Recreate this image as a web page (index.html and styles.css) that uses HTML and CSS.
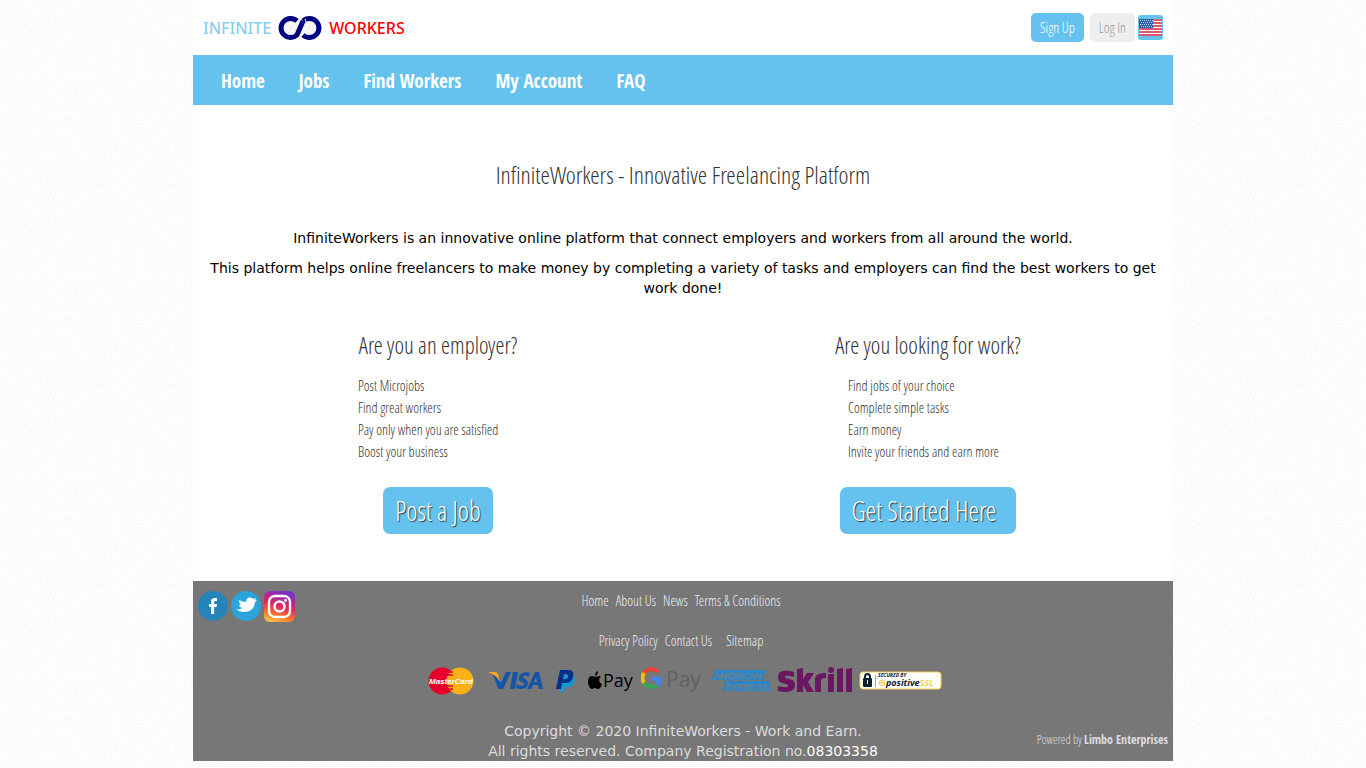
FILE: index.html
```html
<!DOCTYPE html>
<html lang="en">
<head>
    <meta charset="utf-8">
    <title>InfiniteWorkers - Innovative Freelancing Platform</title>
    <link rel="stylesheet" href="styles.css">
</head>
<body>
    <div class="container">
        <header class="header">
            <a href="#" class="logo" aria-label="Infinite Workers">
                <span class="logo-infinite">INFINITE</span>
                <svg width="44" height="26" viewBox="0 0 44 26">
                    <circle cx="12" cy="13" r="9" fill="#f4f4f4"/>
                    <circle cx="32" cy="13" r="9" fill="#f4f4f4"/>
                    <g fill="none" stroke="#000080" stroke-width="5">
                        <path d="M19 6A9.500 9.500 0 1 0 19 20L25 6"/>
                        <path d="M25 6A9.500 9.500 0 1 1 25 20"/>
                    </g>
                    <path d="M18 9l5-6M22 21l3-4M27 4l2 5" stroke="#fff" stroke-width="1"/>
                </svg>
                <span class="logo-workers">WORKERS</span>
            </a>
            <div class="user-links">
                <a href="#" class="btn-small signup">Sign Up</a>
                <a href="#" class="btn-small login">Log In</a>
                <a href="#" class="flag" aria-label="English">
                    <svg width="23" height="17" viewBox="0 0 23 17">
                        <rect width="23" height="17" fill="#fff"/>
                        <path d="M0 1h23M0 4h23M0 7h23M0 10h23M0 13h23M0 16h23" stroke="#d8253c" stroke-width="1.600"/>
                        <rect width="14" height="9" fill="#2d5fa8"/>
                        <path d="M1 1.500h13M2 3.500h12M1 5.500h13M2 7.500h12" stroke="#b9d4ee" stroke-width="1" stroke-dasharray="1 1"/>
                    </svg>
                </a>
            </div>
        </header>

        <nav class="nav">
            <a href="#">Home</a>
            <a href="#">Jobs</a>
            <a href="#">Find Workers</a>
            <a href="#">My Account</a>
            <a href="#">FAQ</a>
        </nav>

        <main class="main">
            <h1>InfiniteWorkers - Innovative Freelancing Platform</h1>
            <p>InfiniteWorkers is an innovative online platform that connect employers and workers from all around the world.</p>
            <p>This platform helps online freelancers to make money by completing a variety of tasks and employers can find the best workers to get work done!</p>

            <div class="columns">
                <section class="column">
                    <h2>Are you an employer?</h2>
                    <ul>
                        <li>Post Microjobs</li>
                        <li>Find great workers</li>
                        <li>Pay only when you are satisfied</li>
                        <li>Boost your business</li>
                    </ul>
                    <a href="#" class="btn-large">Post a Job</a>
                </section>
                <section class="column">
                    <h2>Are you looking for work?</h2>
                    <ul>
                        <li>Find jobs of your choice</li>
                        <li>Complete simple tasks</li>
                        <li>Earn money</li>
                        <li>Invite your friends and earn more</li>
                    </ul>
                    <a href="#" class="btn-large btn-start">Get Started Here</a>
                </section>
            </div>
        </main>

        <footer class="footer">
            <div class="social">
                <a href="#" aria-label="Facebook">
                    <svg width="30" height="30" viewBox="0 0 30 30">
                        <circle cx="15" cy="15" r="15" fill="#2585b8"/>
                        <path d="M13 23v-7h-2v-3h2v-2c0-3 1.500-4 4-4h2v3h-1.500c-1 0-1.300.5-1.300 1.300V13H19l-.4 3h-2.400v7z" fill="#fff"/>
                    </svg>
                </a>
                <a href="#" aria-label="Twitter">
                    <svg width="30" height="30" viewBox="0 0 30 30">
                        <circle cx="15" cy="15" r="15" fill="#2ba4dc"/>
                        <path d="M5 18c3 1 5 0 6-1-2-1-3-2-3-3h2c-2-2-2-3-2-5 2 1 5 2 7 2 0-4 4-6 7-3l3-1-1 2 2 0-2 2c0 7-6 10-11 10-3 0-6-1-8-3z" fill="#fff"/>
                    </svg>
                </a>
                <a href="#" aria-label="Instagram">
                    <svg width="31" height="31" viewBox="0 0 31 31">
                        <defs>
                            <linearGradient id="insta" x1="0.2" y1="1" x2="0.5" y2="0">
                                <stop offset="0" stop-color="#ffc447"/>
                                <stop offset="0.25" stop-color="#fa7a30"/>
                                <stop offset="0.55" stop-color="#e5265f"/>
                                <stop offset="1" stop-color="#7c2fc8"/>
                            </linearGradient>
                        </defs>
                        <rect width="31" height="31" rx="6" fill="url(#insta)"/>
                        <g fill="none" stroke="#fff" stroke-width="2.400">
                            <rect x="5" y="5" width="21" height="21" rx="6"/>
                            <circle cx="15.500" cy="15.500" r="5"/>
                        </g>
                        <circle cx="21.500" cy="9.500" r="1.400" fill="#fff"/>
                    </svg>
                </a>
            </div>

            <div class="footer-center">
                <div class="footer-links">
                    <a href="#">Home</a>
                    <a href="#">About Us</a>
                    <a href="#">News</a>
                    <a href="#">Terms &amp; Conditions</a>
                </div>
                <div class="footer-links">
                    <a href="#">Privacy Policy</a>
                    <a href="#">Contact Us</a>
                    <a href="#" class="sitemap">Sitemap</a>
                </div>
                <div class="payments">
                    <svg width="46" height="30" viewBox="0 0 46 30">
                        <circle cx="14" cy="15" r="13.500" fill="#e4002b"/>
                        <circle cx="32" cy="15" r="13.500" fill="#fbb017"/>
                        <path d="M20 6h5M19 9h6M18 20h7M19 23h6" stroke="#e4002b" stroke-width="1.500"/>
                        <text x="23" y="18" text-anchor="middle" class="mastercard-text">MasterCard</text>
                    </svg>
                    <svg class="visa" width="56" height="30" viewBox="0 0 56 30">
                        <path d="M0 6h8c2 0 3 1 3.500 3L14 17 19 6h5l-8 17h-5L7 11C6 8 3 7 0 6z" fill="#1555a5"/>
                        <path d="M0 6h8c2 0 3 1 3.500 3l1.500 7C10 10 6 8 0 6z" fill="#f9a61a"/>
                        <path d="M26 6h5l-3 17h-5zM43 7l-1 4c-4-2-6-1-6 0 0 2 5 2 5 6 0 6-7 7-12 5l1-4c3 2 7 2 7 0s-6-2-5-6c0-5 6-7 11-5z" fill="#1555a5"/>
                        <path d="M48 6h4l4 17h-4l-1-4h-5l-2 4h-4zM49 11l-2 5h3z" fill="#1555a5" fill-rule="evenodd"/>
                    </svg>
                    <svg class="paypal" width="19" height="30" viewBox="0 0 19 30">
                        <path d="M7 9h9c3 1 3 4 2 7-1 4-4 5-7 5h-2l-1 5H4z" fill="#139ad6"/>
                        <path d="M4 4h8c5 0 6 3 5 7-1 4-4 6-8 6H6l-1 6H0zM8 8l-1 5h2c4 0 4-5 1-5z" fill="#003087"/>
                    </svg>
                    <svg class="applepay" width="46" height="30" viewBox="0 0 46 30">
                        <path d="M7 10c0-3 1-4 3-5 0 3-1 4-3 5zM4 10c2 0 2 1 3 1s2-1 4-1c1 0 2 1 2 1-3 2-2 6 1 7-1 4-3 5-4 5s-2-1-3-1-2 1-3 1c-2 0-4-4-4-7 0-4 2-6 4-6z" fill="#000"/>
                        <text x="15" y="21" class="pay-text">Pay</text>
                    </svg>
                    <svg width="63" height="30" viewBox="0 0 63 30">
                        <g fill="none" stroke-width="4">
                            <path d="M17 6A9 9 0 0 0 3 7" stroke="#ea4335"/>
                            <path d="M3 7a9 9 0 0 0 0 10" stroke="#fbbc04"/>
                            <path d="M3 17A9 9 0 0 0 16 19" stroke="#34a853"/>
                            <path d="M16 19c2-2 3-3 3-6H11" stroke="#4285f4"/>
                        </g>
                        <text x="25" y="21" class="gpay-text">Pay</text>
                    </svg>
                    <svg width="60" height="30" viewBox="0 0 60 30">
                        <path d="M5 4h50l-3 10H0zM14 15h45v10H12z" fill="#2a86c8"/>
                        <text x="2" y="13" class="amex-text">AMERICAN</text>
                        <text x="14" y="24" class="amex-text">EXPRESS</text>
                    </svg>
                    <svg width="74" height="30" viewBox="0 0 74 30">
                        <path d="M16 6v5c-4-1-9-2-9 0 0 3 10 0 10 8 0 7-8 8-17 6v-5c5 1 10 2 10 0C10 16 0 20 0 11 0 4 8 4 16 6zM19 3l6-1v11l4-6h7l-6 9 6 10h-7l-4-7v7h-6zM37 26V14c0-5 3-7 11-7v5c-4 0-5 1-5 3v11zM50 8h6v18h-6zM59 3l6-1v24h-6zM68 3l6-1v24h-6z" fill="#6b1661"/>
                        <circle cx="53" cy="4" r="3" fill="#6b1661"/>
                    </svg>
                    <svg width="83" height="30" viewBox="0 0 83 30">
                        <rect x="1" y="6" width="81" height="17" rx="3" fill="#fff" stroke="#f5cf58" stroke-width="1"/>
                        <path d="M6 12v-1c0-4 5-4 5 0v1" fill="none" stroke="#0d202d" stroke-width="2"/>
                        <rect x="4" y="12" width="9" height="9" rx="1" fill="#0d202d"/>
                        <path d="M8.500 14v4" stroke="#fff" stroke-width="1"/>
                        <path d="M16.500 9v12" stroke="#9caab4" stroke-width="1"/>
                        <circle cx="23" cy="17" r="3" fill="none" stroke="#f5cf58"/>
                        <path d="M20 17h6M23 14v6" stroke="#f5cf58"/>
                        <text x="19" y="11" class="ssl-small">SECURED BY</text>
                        <text x="27" y="20" class="ssl-text">positive<tspan class="ssl-yellow">SSL</tspan></text>
                    </svg>
                </div>
                <p class="copyright">Copyright © 2020 InfiniteWorkers - Work and Earn.<br>All rights reserved. Company Registration no.<a href="#">08303358</a></p>
            </div>

            <div class="powered">Powered by <a href="#">Limbo Enterprises</a></div>
        </footer>
    </div>
</body>
</html>
```
FILE: styles.css
```css
body {
    margin: 0;
    background: #fff url("data:image/svg+xml,%3Csvg xmlns='http://www.w3.org/2000/svg' width='200' height='200'%3E%3Cfilter id='n' x='0' y='0' width='1' height='1'%3E%3CfeTurbulence type='fractalNoise' baseFrequency='0.7' numOctaves='2' stitchTiles='stitch'/%3E%3CfeColorMatrix values='0 0 0 0 0.5 0 0 0 0 0.5 0 0 0 0 0.5 0.4 0 0 0 -0.17'/%3E%3C/filter%3E%3Crect width='200' height='200' filter='url(%23n)'/%3E%3C/svg%3E");
    font-family: "DejaVu Sans", sans-serif;
    font-size: 14px;
    line-height: 20px;
    color: #000;
}

a {
    text-decoration: none;
    color: inherit;
}

svg {
    display: block;
}

.container {
    max-width: 980px;
    margin: 0 auto;
    background-color: #fff;
}

.header {
    display: flex;
    justify-content: space-between;
    align-items: center;
    height: 55px;
    padding: 0 10px;
}

.logo {
    display: flex;
    align-items: center;
    gap: 7px;
    font-family: "Noto Sans", sans-serif;
    font-size: 16px;
    font-weight: 500;
}

.logo-infinite {
    color: #87cef0;
}

.logo-workers {
    color: #f00;
}

.user-links,
h1,
h2,
.column,
.footer-links,
.powered {
    font-family: "Open Sans Condensed Light", "Open Sans Condensed", "Open Sans", sans-serif;
    font-weight: 300;
}

.user-links {
    display: flex;
    align-items: center;
    gap: 3px;
}

.btn-small {
    padding: 5px 9px 4px;
    border-radius: 5px;
}

.signup {
    margin-right: 3px;
    background-color: #65c2ef;
    color: #fff;
}

.login {
    background-color: #eee;
    color: #999;
}

.flag {
    padding: 4px 1px;
    border-radius: 3px;
    background-color: #65c2ef;
}

.nav {
    display: flex;
    gap: 34px;
    padding: 2px 28px 0;
    background-color: #65c2ef;
    color: #fff;
    font-family: "Open Sans Condensed", "Open Sans", sans-serif;
    font-size: 19px;
    font-weight: 700;
    line-height: 48px;
}

.main {
    padding: 50px 0 47px;
    text-align: center;
}

.main p {
    margin: 0 10px 10px;
}

h1 {
    margin: 0 0 33px;
    font-size: 24px;
    font-weight: 300;
    line-height: 40px;
    color: #333;
}

.columns {
    display: grid;
    grid-template-columns: 1fr 1fr;
    margin-top: 27px;
}

h2 {
    margin: 0 0 10px;
    font-size: 23px;
    font-weight: 300;
    line-height: 40px;
    color: #333;
}

.column ul {
    margin: 0 0 24px;
    padding: 0 0 0 165px;
    list-style: none;
    line-height: 22px;
    text-align: left;
    color: #333;
}

.btn-large {
    display: inline-block;
    padding: 4px 12px 3px;
    border-radius: 7px;
    background-color: #65c2ef;
    color: #fff;
    font-size: 27px;
    line-height: 40px;
    text-shadow: 1px 1px 1px #333;
}

.btn-start {
    padding-right: 20px;
}

.footer {
    display: grid;
    grid-template-columns: 1fr auto 1fr;
    background-color: #777;
    color: #ddd;
}

.social {
    display: flex;
    align-items: flex-start;
    gap: 3px;
    padding: 10px 5px;
}

.footer-links {
    display: flex;
    justify-content: center;
    gap: 7px;
    padding-right: 4px;
    line-height: 40px;
    color: #eee;
}

.sitemap {
    margin-left: 7px;
}

.payments {
    display: flex;
    gap: 7px;
    padding: 5px 0 5px 4px;
}

.visa,
.paypal,
.applepay {
    margin-left: 6px;
}

.mastercard-text {
    font: italic bold 8px "Liberation Sans", sans-serif;
    fill: #fff;
}

.pay-text {
    font: 18px "Open Sans", sans-serif;
    fill: #000;
}

.gpay-text {
    font: 21px "Open Sans", sans-serif;
    fill: #5f6368;
}

.amex-text {
    font: italic bold 9px "Liberation Sans", sans-serif;
    fill: #6f7f8a;
}

.ssl-small {
    font: italic bold 5px "Open Sans", sans-serif;
    fill: #0d202d;
}

.ssl-text {
    font: italic bold 9px "Open Sans", sans-serif;
    fill: #0d202d;
}

.ssl-yellow {
    fill: #f5cf58;
}

.copyright {
    margin: 20px 0 0;
    text-align: center;
}

.copyright a {
    color: #fff;
}

.powered {
    align-self: end;
    padding: 0 5px 11px;
    font-size: 12px;
    text-align: right;
}

.powered a {
    font-family: "Open Sans Condensed", "Open Sans", sans-serif;
    font-weight: 700;
}
```
